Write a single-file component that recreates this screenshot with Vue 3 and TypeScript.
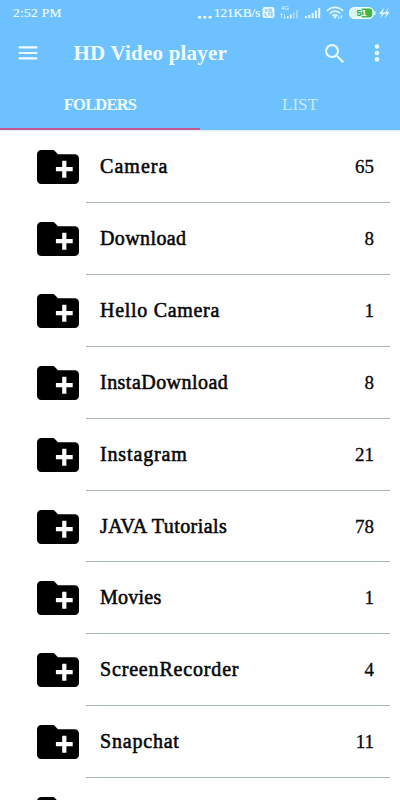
<script setup lang="ts">
import { ref } from 'vue'

interface Folder {
  name: string
  count: number | null
  spacing: number
}

const folders: Folder[] = [
  { name: 'Camera', count: 65, spacing: 1.05 },
  { name: 'Download', count: 8, spacing: 0.4 },
  { name: 'Hello Camera', count: 1, spacing: 0.7 },
  { name: 'InstaDownload', count: 8, spacing: 0.47 },
  { name: 'Instagram', count: 21, spacing: 0.85 },
  { name: 'JAVA Tutorials', count: 78, spacing: 0.45 },
  { name: 'Movies', count: 1, spacing: 0.25 },
  { name: 'ScreenRecorder', count: 4, spacing: 0.83 },
  { name: 'Snapchat', count: 11, spacing: 0.8 },
  { name: '', count: null, spacing: 0 },
]

const tabs = ['FOLDERS', 'LIST']
const active = ref(0)
</script>

<template>
  <div class="screen">
    <header class="top">
      <div class="status">
        <span class="time">2:52 PM</span>
        <div class="indicators">
          <svg class="dots" width="14" height="14" viewBox="0 0 14 14"><path d="M0 9h3v2.6H0zM5.3 9h3v2.6h-3zM10.6 9h3v2.6h-3z" /></svg>
          <span class="speed">121KB/s</span>
          <svg class="volte" width="13" height="13" viewBox="0 0 13 13">
            <rect x=".5" y="1" width="12" height="11" rx="2.5" />
            <path class="cut" d="M3 3l1.2 2.7L5.4 3M7 3.2h2.5v2.3H7zM3.2 7v3h2M6 7.2h2.3M7.1 7.2v3M11 7.2H9.3v2.9H11M9.3 8.6h1.4" />
          </svg>
          <svg class="cell" width="20" height="17" viewBox="0 0 20 17">
            <text x="1" y="6">4G</text>
            <path d="M1.5 14v-4m-1 1 1-1.5 1 1.5M4.5 10v4m-1-1 1 1.5 1-1.5" fill="none" stroke="#d5f2ff" stroke-width=".8" />
            <path d="M7 12h1.5v2.5H7zM10 10.5h1.5v4H10z" />
            <path d="M13 8.5h1.6v6H13zM16 6h1.8v8.5H16z" opacity=".45" />
          </svg>
          <svg class="signal" width="16" height="12" viewBox="0 0 16 12"><path d="M0 9.3h2v2H0zM3.3 7.9h2v3.4h-2zM6.6 6h2v5.3h-2zM9.9 3.5h2v7.8h-2zM13.2 1h2v10.3h-2z" /></svg>
          <svg class="wifi" width="18" height="14" viewBox="0 0 18 14">
            <path d="M1 4.8C5.5.1 12.5.1 17 4.8M3.7 7.5c3-3.1 7.6-3.1 10.6 0M6.3 10c1.6-1.6 3.8-1.6 5.4 0" fill="none" stroke="#e1f6ff" stroke-width="1.7" />
            <path d="M7.2 10.7 9 13l1.8-2.3c-1-1-2.6-1-3.6 0z" />
            <path d="M13 9.5v3m-1-1 1 1.2 1-1.2M15.5 12.5v-3m-1 1 1-1.2 1 1.2" fill="none" stroke="#d5f2ff" stroke-width=".8" />
          </svg>
          <svg class="battery" width="27" height="12" viewBox="0 0 27 12">
            <rect x=".7" y=".7" width="23.6" height="10.6" rx="4.6" fill="#d6f5ef" stroke="#effcff" stroke-width="1.4" />
            <path d="M12.8 1.6h7.5a3 3 0 0 1 3 3v2.8a3 3 0 0 1-3 3h-7.5z" fill="#45b649" />
            <rect x="25.2" y="4" width="1.3" height="4" rx=".6" />
            <text x="7.6" y="9.2"><tspan fill="#35a64b">5</tspan><tspan fill="#fff">1</tspan></text>
          </svg>
          <svg class="bolt" width="11" height="12" viewBox="0 0 11 12"><path d="M5.2.5 0 7h3L1.2 11.5 6 5.4H3.4zM10 .5 5 7h2.4l-1.9 4.5L10.8 5H8.1z" /></svg>
        </div>
      </div>
      <div class="toolbar">
        <svg class="menu" width="20" height="14" viewBox="0 0 20 14"><path d="M1.5 1.4h17M1.5 7h17M1.5 12.4h17" /></svg>
        <h1>HD Video player</h1>
        <svg class="search" width="19" height="19" viewBox="3 3 17.49 17.49">
          <path d="M15.5 14h-.79l-.28-.27A6.47 6.47 0 0 0 16 9.5 6.5 6.5 0 1 0 9.5 16c1.61 0 3.09-.59 4.23-1.57l.27.28v.79l5 4.99L20.49 19l-4.99-5zm-6 0C7.01 14 5 11.99 5 9.5S7.01 5 9.5 5 14 7.01 14 9.5 11.99 14 9.5 14z" />
        </svg>
        <svg class="more" width="6" height="18" viewBox="0 0 6 18"><circle cx="3" cy="2.6" r="2.3" /><circle cx="3" cy="9" r="2.3" /><circle cx="3" cy="15.4" r="2.3" /></svg>
      </div>
      <nav class="tabs">
        <button v-for="(tab, i) in tabs" :key="tab" class="tab" :class="{ active: active === i }" @click="active = i">{{ tab }}</button>
      </nav>
    </header>
    <main class="list">
      <div v-for="(f, i) in folders" :key="i" class="row">
        <svg class="folder" width="42" height="34" viewBox="2 4 20 16" preserveAspectRatio="none">
          <path d="M20 6h-8l-2-2H4c-1.11 0-1.99.89-1.99 2L2 18c0 1.11.89 2 2 2h16c1.11 0 2-.89 2-2V8c0-1.11-.89-2-2-2zm-1 8h-3v3h-2v-3h-3v-2h3V9h2v3h3v2z" />
        </svg>
        <div class="entry">
          <span class="name" :style="{ letterSpacing: f.spacing + 'px' }">{{ f.name }}</span>
          <span class="count">{{ f.count }}</span>
        </div>
      </div>
    </main>
  </div>
</template>

<style>
body {
  margin: 0;
  background: #fefefe;
}
</style>

<style scoped>
.screen {
  width: 400px;
  height: 800px;
  overflow: hidden;
  background: #fefefe;
  font-family: "Liberation Serif", serif;
}
.top {
  height: 130px;
  background: #6ec1ff;
  color: #effcff;
  fill: #e6f9ff;
  box-shadow: 0 1px 2px #dceaf5;
}
.status {
  height: 25px;
  display: flex;
  align-items: center;
  justify-content: space-between;
  padding: 0 10px 0 13px;
  box-sizing: border-box;
}
.time {
  font-size: 13.5px;
  line-height: 24px;
  letter-spacing: 0.25px;
  -webkit-text-stroke: 0.2px #e6f9ff;
}
.indicators {
  display: flex;
  align-items: center;
}
.speed {
  font-size: 13px;
  line-height: 24px;
  margin-left: 2px;
  width: 47px;
  white-space: nowrap;
  -webkit-text-stroke: 0.2px #e6f9ff;
}
.dots { margin-top: 2px; }
.volte { margin-left: 1px; }
.cell { margin-left: 5px; }
.cell text { font: 6px "Liberation Sans", sans-serif; }
.cut { fill: none; stroke: #78bfed; stroke-width: 0.9; }
.signal { margin-left: 5px; }
.wifi { margin-left: 5px; }
.battery { margin-left: 5px; }
.battery text { font: bold 9px "Liberation Sans", sans-serif; }
.bolt { margin-left: 3px; }
.toolbar {
  height: 56px;
  display: flex;
  align-items: center;
  padding: 0 20px 0 18px;
}
.menu {
  fill: none;
  stroke: #effcff;
  stroke-width: 2.2;
  stroke-linecap: round;
}
h1 {
  flex: 1;
  margin: 0 0 0 35.5px;
  font-size: 21px;
  line-height: 28px;
  font-weight: 700;
  letter-spacing: 0.2px;
}
.more { margin-left: 30px; }
.tabs {
  display: grid;
  grid-template-columns: 1fr 1fr;
  height: 49px;
}
.tab {
  border: 0;
  border-bottom: 2px solid transparent;
  background: none;
  padding: 0;
  font: 17px "Liberation Serif", serif;
  color: #c6eaff;
}
.tab.active {
  border-color: #c3578f;
  color: #effcff;
  font-weight: 700;
  font-size: 16.5px;
  letter-spacing: -0.8px;
}
.list {
  display: flex;
  flex-direction: column;
  padding-top: 1px;
}
.row {
  height: 71.92px;
  flex: none;
  display: flex;
  padding: 0 10px 0 37px;
}
.folder {
  margin-top: 19px;
  flex: none;
}
.entry {
  flex: 1;
  margin-left: 7px;
  padding: 0 16px 0 14px;
  display: flex;
  justify-content: space-between;
  border-bottom: 1px solid #a9b4b6;
  color: #080808;
  font-size: 20px;
  line-height: 71px;
  -webkit-text-stroke: 0.55px #080808;
  white-space: nowrap;
}
.count {
  font-size: 19px;
  -webkit-text-stroke-width: 0.3px;
}
</style>
